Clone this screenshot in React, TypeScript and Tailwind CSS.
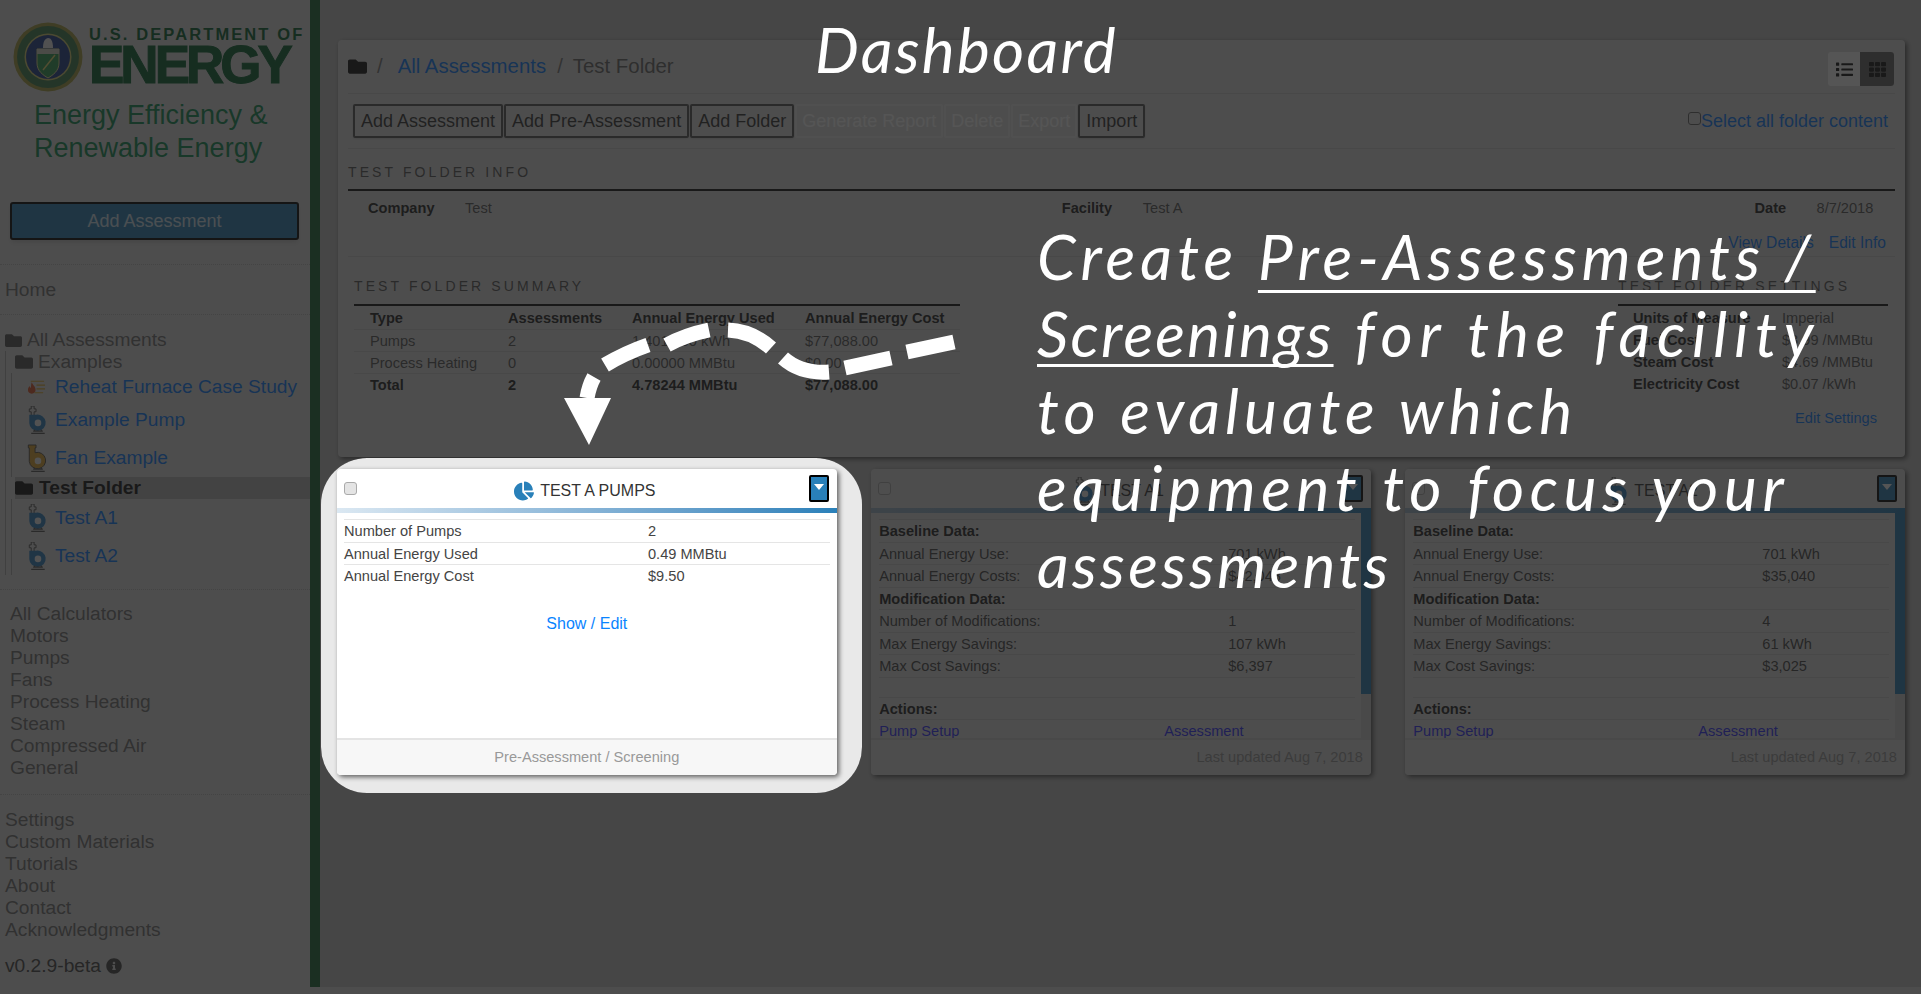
import { FaChartPie, FaFolder, FaInfoCircle, FaList, FaTh } from "react-icons/fa";

const Dotted = ({ className = "" }: { className?: string }) => (
  <div className={`border-t border-dotted border-[#bbb] ${className}`} />
);

const Seal = () => (
  <svg viewBox="0 0 70 70" className="h-[70px] w-[70px] shrink-0">
    <circle cx="35" cy="35" r="34.5" fill="#a8a040" />
    <circle cx="35" cy="35" r="31" fill="#3f7f4c" />
    <circle cx="35" cy="35" r="23.5" fill="#d8d070" />
    <circle cx="35" cy="35" r="22" fill="#1f3f8a" />
    <path d="M24 27h22v14c0 8-6 12-11 15-5-3-11-7-11-15z" fill="#2f9a50" stroke="#e8e490" strokeWidth="1" />
    <path d="M24 27h22v5H24z" fill="#d8d8c8" />
    <path d="M30 26c0-5 1-9 5-10 3 0 5 3 5 10z" fill="#f0f0f0" />
    <path d="M30 48l12-15" stroke="#f0e070" strokeWidth="1.5" />
  </svg>
);

const Pump = ({ fan = false }: { fan?: boolean }) => (
  <svg viewBox="0 0 20 29" className="h-[28px] w-[20px] shrink-0">
    {fan ? (
      <path d="M1 1h8v3H8v5a8.5 8.5 0 1 1-6 9V4H1z" fill="#e0a52c" stroke="#444" strokeWidth="0.9" />
    ) : (
      <>
        <path d="M4 0h3v3h2v3H7v4H4V6H2V3h2z" fill="#e0e0e0" stroke="#555" strokeWidth="1" />
        <path d="M2 9h7a8.5 8.5 0 1 1-7 8.5z" fill="#2f80c0" />
      </>
    )}
    <circle cx="11" cy="17.5" r="3.4" fill="#f2f2f2" />
    <path d="M6 26h10M7.5 26v-1.5M14.5 26v-1.5M4 28.3h14" stroke="#555" strokeWidth="1.3" fill="none" />
  </svg>
);

const Furnace = () => (
  <svg viewBox="0 0 20 16" className="h-[16px] w-[19px] shrink-0">
    <path d="M5 3c1 3 4 4 4 8a4 4 0 0 1-8 0c0-2 1-3 2-4 0 1 .5 2 1 2 .5-2 0-4 1-6z" fill="#e0562a" />
    <path d="M4 2h14M10 6h9M10 10h9M8 14h9" stroke="#e0a82c" strokeWidth="1.2" fill="none" />
  </svg>
);

const TreeRow = ({ label, h, children }: { label: string; h: string; children: React.ReactNode }) => (
  <div className={`flex items-center gap-[9px] pl-[26px] ${h}`}>
    <span className="flex w-[19px] justify-center">{children}</span>
    <span className="text-[#0a7bff]">{label}</span>
  </div>
);

const Sidebar = () => (
  <aside className="flex h-full w-[320px] shrink-0 flex-col border-r-[10px] border-[#186834] bg-[#e0e0e0] text-[19.2px] leading-[22px] text-[#707070]">
    <div className="flex gap-[6px] pl-[13px] pt-[22px]">
      <Seal />
      <div className="text-[#06602f]">
        <div className="pt-[4px] text-[16.5px] font-bold leading-[16px] tracking-[2.1px]">U.S. DEPARTMENT OF</div>
        <div className="mt-[1px] text-[53px] font-bold leading-[44px] tracking-[-4px] [-webkit-text-stroke:1px_#06602f]">ENERGY</div>
      </div>
    </div>
    <div className="ml-[34px] mt-[7px] text-[27px] leading-[33px] text-[#0e8a50]">
      Energy Efficiency &amp;
      <br />
      Renewable Energy
    </div>
    <button className="mx-[10px] mt-[37px] h-[38px] w-[289px] rounded-[3px] border-2 border-black bg-[#2980b9] text-[18px] text-white/80 shadow-md">
      Add Assessment
    </button>
    <Dotted className="mt-[24px]" />
    <div className="flex h-[49px] items-center pl-[5px]">Home</div>
    <Dotted />
    <div className="mt-[14px] flex h-[22px] items-center gap-[5px] pl-[5px]">
      <FaFolder className="h-[17px] w-[17px] text-[#555]" />
      All Assessments
    </div>
    <div className="ml-[5px] border-l border-[#aaa]">
      <div className="flex h-[22px] items-center gap-[5px] pl-[9px]">
        <FaFolder className="h-[18px] w-[18px] text-[#555]" />
        Examples
      </div>
      <div className="ml-[5px] border-l border-[#aaa]">
        <div className="-ml-[11px]">
          <TreeRow label="Reheat Furnace Case Study" h="h-[28px]"><Furnace /></TreeRow>
          <TreeRow label="Example Pump" h="h-[38px]"><Pump /></TreeRow>
          <TreeRow label="Fan Example" h="h-[38px]"><Pump fan /></TreeRow>
        </div>
      </div>
      <div className="ml-[9px] flex h-[22px] items-center gap-[6px] bg-[#b8b8b8] font-bold text-[#111]">
        <FaFolder className="h-[18px] w-[18px]" />
        Test Folder
      </div>
      <div className="ml-[5px] border-l border-[#aaa]">
        <div className="-ml-[11px]">
          <TreeRow label="Test A1" h="h-[38px]"><Pump /></TreeRow>
          <TreeRow label="Test A2" h="h-[38px]"><Pump /></TreeRow>
        </div>
      </div>
    </div>
    <Dotted className="mt-[14px]" />
    <div className="mt-[13px] pl-[10px]">
      {["All Calculators", "Motors", "Pumps", "Fans", "Process Heating", "Steam", "Compressed Air", "General"].map((t) => (
        <div key={t}>{t}</div>
      ))}
    </div>
    <Dotted className="mt-[15px]" />
    <div className="mt-[14px] pl-[5px]">
      {["Settings", "Custom Materials", "Tutorials", "About", "Contact", "Acknowledgments"].map((t) => (
        <div key={t}>{t}</div>
      ))}
    </div>
    <div className="mt-[14px] flex items-center gap-[5px] pl-[5px] text-[#444]">
      v0.2.9-beta <FaInfoCircle className="h-[16px] w-[16px]" />
    </div>
  </aside>
);

const ToolButton = ({ label, off = false }: { label: string; off?: boolean }) => (
  <button
    className={`h-[34px] rounded-[2px] border-2 text-[18px] leading-none ${
      off ? "border-[#ececec] px-[5px] text-[#fff]" : "border-[#555] px-[6px] text-[#333] shadow-sm"
    }`}
  >
    {label}
  </button>
);

const Heading = ({ children, className = "" }: { children: React.ReactNode; className?: string }) => (
  <div className={`border-b-2 border-[#111] text-[14px] leading-[16px] tracking-[3.1px] text-[#555] ${className}`}>
    {children}
  </div>
);

const summaryRows = [
  ["Pumps", "2", "1,401,600 kWh", "$77,088.00"],
  ["Process Heating", "0", "0.00000 MMBtu", "$0.00"],
];

const settingsRows = [
  ["Units of Measure", "Imperial"],
  ["Fuel Cost", "$3.99 /MMBtu"],
  ["Steam Cost", "$4.69 /MMBtu"],
  ["Electricity Cost", "$0.07 /kWh"],
];

const FolderPanel = () => (
  <section className="h-[417px] rounded-[4px] bg-[#e0e0e0] px-[10px] text-[14.6px] text-[#555] shadow-[2px_2px_5px_rgba(0,0,0,0.6)]">
    <div className="flex h-[54px] items-center border-b border-black/10 text-[20.4px]">
      <FaFolder className="h-[19px] w-[19px] text-[#111]" />
      <span className="ml-[10px] text-[#777]">/</span>
      <span className="ml-[15px] text-[#0a7bff]">All Assessments</span>
      <span className="ml-[11px] text-[#777]">/</span>
      <span className="ml-[10px] text-[#666]">Test Folder</span>
      <div className="ml-auto mr-[1px] mt-[5px] flex h-[34px] w-[66px] overflow-hidden rounded-[3px] bg-white">
        <span className="flex w-[32px] items-center justify-center text-[#111]"><FaList className="h-[17px] w-[17px]" /></span>
        <span className="flex w-[34px] items-center justify-center bg-[#666] text-[#111]"><FaTh className="h-[17px] w-[17px]" /></span>
      </div>
    </div>
    <div className="flex h-[55px] items-center border-b border-black/10 pl-[5px]">
      <div className="flex gap-[1px]">
        <ToolButton label="Add Assessment" />
        <ToolButton label="Add Pre-Assessment" />
        <ToolButton label="Add Folder" />
        <ToolButton label="Generate Report" off />
        <ToolButton label="Delete" off />
        <ToolButton label="Export" off />
        <ToolButton label="Import" />
      </div>
      <div className="ml-auto flex items-center pr-[7px] text-[18px] text-[#0a7bff]">
        <input type="checkbox" className="mb-[6px] h-[13px] w-[13px] appearance-none rounded-[3px] border border-[#666] bg-[#ddd]" />
        Select all folder content
      </div>
    </div>
    <Heading className="mt-[15px] pb-[9px]">TEST FOLDER INFO</Heading>
    <div className="mt-[8px] flex h-[20px] items-center">
      <b className="ml-[20px] w-[97px] text-[#222]">Company</b>
      <span>Test</span>
      <b className="ml-[570px] w-[81px] text-[#222]">Facility</b>
      <span>Test A</span>
      <b className="ml-[572px] w-[62px] text-[#222]">Date</b>
      <span>8/7/2018</span>
    </div>
    <div className="flex h-[38px] items-end justify-end border-b border-black/10 pb-[2px] pr-[9px] text-[15.6px] text-[#0a7bff]">
      View Details
      <span className="ml-[15px]">Edit Info</span>
    </div>
    <div className="mt-[21px] flex justify-between pl-[6px] pr-[7px]">
      <div className="w-[606px]">
        <Heading className="pb-[10px]">TEST FOLDER SUMMARY</Heading>
        <div className="grid h-[23px] grid-cols-[138px_124px_173px_1fr] pl-[16px] font-bold leading-[24px] text-[#222]">
          <span>Type</span>
          <span>Assessments</span>
          <span>Annual Energy Used</span>
          <span>Annual Energy Cost</span>
        </div>
        {summaryRows.map((r) => (
          <div key={r[0]} className="grid h-[22px] grid-cols-[138px_124px_173px_1fr] border-t border-black/10 pl-[16px] leading-[22px]">
            {r.map((c) => <span key={c}>{c}</span>)}
          </div>
        ))}
        <div className="grid h-[22px] grid-cols-[138px_124px_173px_1fr] border-t border-black/10 pl-[16px] font-bold leading-[22px] text-[#222]">
          <span>Total</span><span>2</span><span>4.78244 MMBtu</span><span>$77,088.00</span>
        </div>
      </div>
      <div className="w-[270px]">
        <Heading className="pb-[10px]">TEST FOLDER SETTINGS</Heading>
        {settingsRows.map((r, i) => (
          <div key={r[0]} className={`grid grid-cols-[149px_1fr] pl-[15px] ${i === 0 ? "h-[23px] leading-[24px]" : "h-[22px] leading-[22px]"}`}>
            <b className="text-[#222]">{r[0]}</b>
            <span>{r[1]}</span>
          </div>
        ))}
        <div className="mt-[13px] pr-[11px] text-right text-[#0a7bff]">Edit Settings</div>
      </div>
    </div>
  </section>
);

const Caret = () => (
  <button className="flex h-[27px] w-[20px] shrink-0 items-center justify-center rounded-[2px] border-2 border-black bg-[#2980b9]">
    <svg viewBox="0 0 10 6" className="mb-[4px] w-[10px]"><path d="M0 0h10L5 6z" fill="#fff" /></svg>
  </button>
);

type CardProps = {
  title: string;
  footer: string;
  lit?: boolean;
  children: React.ReactNode;
};

const Card = ({ title, footer, lit = false, children }: CardProps) => (
  <article
    className={`flex h-[306px] flex-col overflow-hidden rounded-[4px] text-[14.6px] text-[#444] shadow-[2px_2px_5px_rgba(0,0,0,0.6)] ${
      lit ? "relative z-10 bg-white" : "bg-[#e0e0e0]"
    }`}
  >
    <div className="flex h-[39px] shrink-0 items-center pl-[7px] pr-[8px]">
      <input type="checkbox" className="h-[13px] w-[13px] appearance-none rounded-[3px] border border-[#aaa] bg-[#e4e4e4]" />
      <div className="flex flex-1 items-center justify-center gap-[6px] pl-[4px] pt-[4px] text-[16px] text-[#333]">
        {lit ? <FaChartPie className="h-[20px] w-[20px] text-[#2980b9]" /> : <Pump />}
        {title}
      </div>
      <Caret />
    </div>
    <div className={`h-[5px] shrink-0 bg-gradient-to-r to-[#2980b9] ${lit ? "from-[#dbe8f2]" : "from-[#9fb8ca]"}`} />
    {children}
    <div
      className={`mt-auto flex h-[37px] shrink-0 items-center border-t-2 px-[8px] text-[#999] ${
        lit ? "justify-center border-[#e4e4e4] bg-[#f7f7f7]" : "justify-end border-[#d0d0d0] bg-[#dedede]"
      }`}
    >
      {footer}
    </div>
  </article>
);

const Pair = ({ a, b, cols, bold = false, h = "h-[22.5px]" }: { a: string; b?: string; cols: string; bold?: boolean; h?: string }) => (
  <div className={`grid border-t border-black/10 leading-[22px] ${h} ${cols} ${bold ? "font-bold text-[#222]" : ""}`}>
    <span>{a}</span>
    <span>{b}</span>
  </div>
);

const AssessmentBody = ({ values }: { values: string[] }) => {
  const cols = "grid-cols-[349px_1fr]";
  return (
    <div className="flex h-[225px] shrink-0">
      <div className="flex-1 overflow-hidden pl-[8px] pr-[6px] pt-[6px]">
        <Pair a="Baseline Data:" cols={cols} bold />
        <Pair a="Annual Energy Use:" b={values[0]} cols={cols} />
        <Pair a="Annual Energy Costs:" b={values[1]} cols={cols} />
        <Pair a="Modification Data:" cols={cols} bold />
        <Pair a="Number of Modifications:" b={values[2]} cols={cols} />
        <Pair a="Max Energy Savings:" b={values[3]} cols={cols} />
        <Pair a="Max Cost Savings:" b={values[4]} cols={cols} />
        <Pair a="" cols={cols} h="h-[20px]" />
        <Pair a="Actions:" cols={cols} bold />
        <div className="grid h-[22.5px] grid-cols-[285px_1fr] border-t border-black/10 leading-[22px] text-[#2f2fff]">
          <span>Pump Setup</span>
          <span>Assessment</span>
        </div>
      </div>
      <div className="w-[10px] shrink-0 bg-[#d0d0d0]">
        <div className="h-[181px] bg-[#2980b9]" />
      </div>
    </div>
  );
};

const PreAssessmentCard = () => (
  <Card title="TEST A PUMPS" footer="Pre-Assessment / Screening" lit>
    <div className="px-[7px] pt-[6px]">
      <Pair a="Number of Pumps" b="2" cols="grid-cols-[304px_1fr]" />
      <Pair a="Annual Energy Used" b="0.49 MMBtu" cols="grid-cols-[304px_1fr]" />
      <Pair a="Annual Energy Cost" b="$9.50" cols="grid-cols-[304px_1fr]" />
      <div className="mt-[25px] text-center text-[16px] text-[#0a84ff]">Show / Edit</div>
    </div>
  </Card>
);

const Annotation = () => (
  <div className="pointer-events-none absolute inset-0 z-20 overflow-hidden text-white [font-family:Lato,sans-serif]">
    {/* the shadow of this hole dims everything but the first card */}
    <div className="absolute left-[321px] top-[458px] h-[335px] w-[541px] rounded-[46px] shadow-[0_0_0_2500px_rgba(28,28,28,0.75)]" />
    <div className="absolute left-[815px] top-[14px] text-[62px] italic leading-[70px] tracking-[2.3px]">Dashboard</div>
    <div className="absolute left-[1037px] top-[218px] text-[62px] italic leading-[77px] tracking-[5.1px]">
      <div>
        Create{" "}
        <span className="underline decoration-[3px] underline-offset-[10px] [text-decoration-skip-ink:none]">Pre-Assessments /</span>
      </div>
      <div className="tracking-[6.8px]">
        <span className="tracking-[2.3px] underline decoration-[3px] underline-offset-[7px] [text-decoration-skip-ink:none]">Screenings</span> for the facility
      </div>
      <div>to evaluate which</div>
      <div className="tracking-[5.7px]">equipment to focus your</div>
      <div className="tracking-[3.3px]">assessments</div>
    </div>
    <svg viewBox="0 0 1921 994" className="absolute inset-0 h-[994px] w-[1921px]">
      <path
        d="M954 342L907 352M891 358L845 368M829 372Q801 374 783 358M771 348Q752 331 728 330M709 330Q685 335 667 345M648 345Q625 353 605 365M594 377Q589 386 587 398"
        fill="none"
        stroke="#fff"
        strokeWidth="15"
      />
      <path d="M564 398h47l-22 47z" fill="#fff" />
    </svg>
  </div>
);

export default function App() {
  return (
    <div className="relative h-[994px] w-[1921px] overflow-hidden bg-[#e0e0e0] [font-family:'Liberation_Sans',Arial,sans-serif]">
      <div className="flex h-[987px]">
        <Sidebar />
        <main className="flex-1 bg-[#c4c4c4] pl-[18px] pr-[16px] pt-[40px]">
          <FolderPanel />
          <div className="-ml-[1px] mt-[12px] grid grid-cols-3 gap-[34.5px]">
            <PreAssessmentCard />
            <Card title="TEST A1" footer="Last updated Aug 7, 2018">
              <AssessmentBody values={["701 kWh", "$42,048", "1", "107 kWh", "$6,397"]} />
            </Card>
            <Card title="TEST A2" footer="Last updated Aug 7, 2018">
              <AssessmentBody values={["701 kWh", "$35,040", "4", "61 kWh", "$3,025"]} />
            </Card>
          </div>
        </main>
      </div>
      {/* page colour inside the spotlight, behind the lit card */}
      <div className="absolute left-[321px] top-[458px] h-[335px] w-[541px] rounded-[46px] bg-[#e9e9e9]" />
      <Annotation />
    </div>
  );
}
